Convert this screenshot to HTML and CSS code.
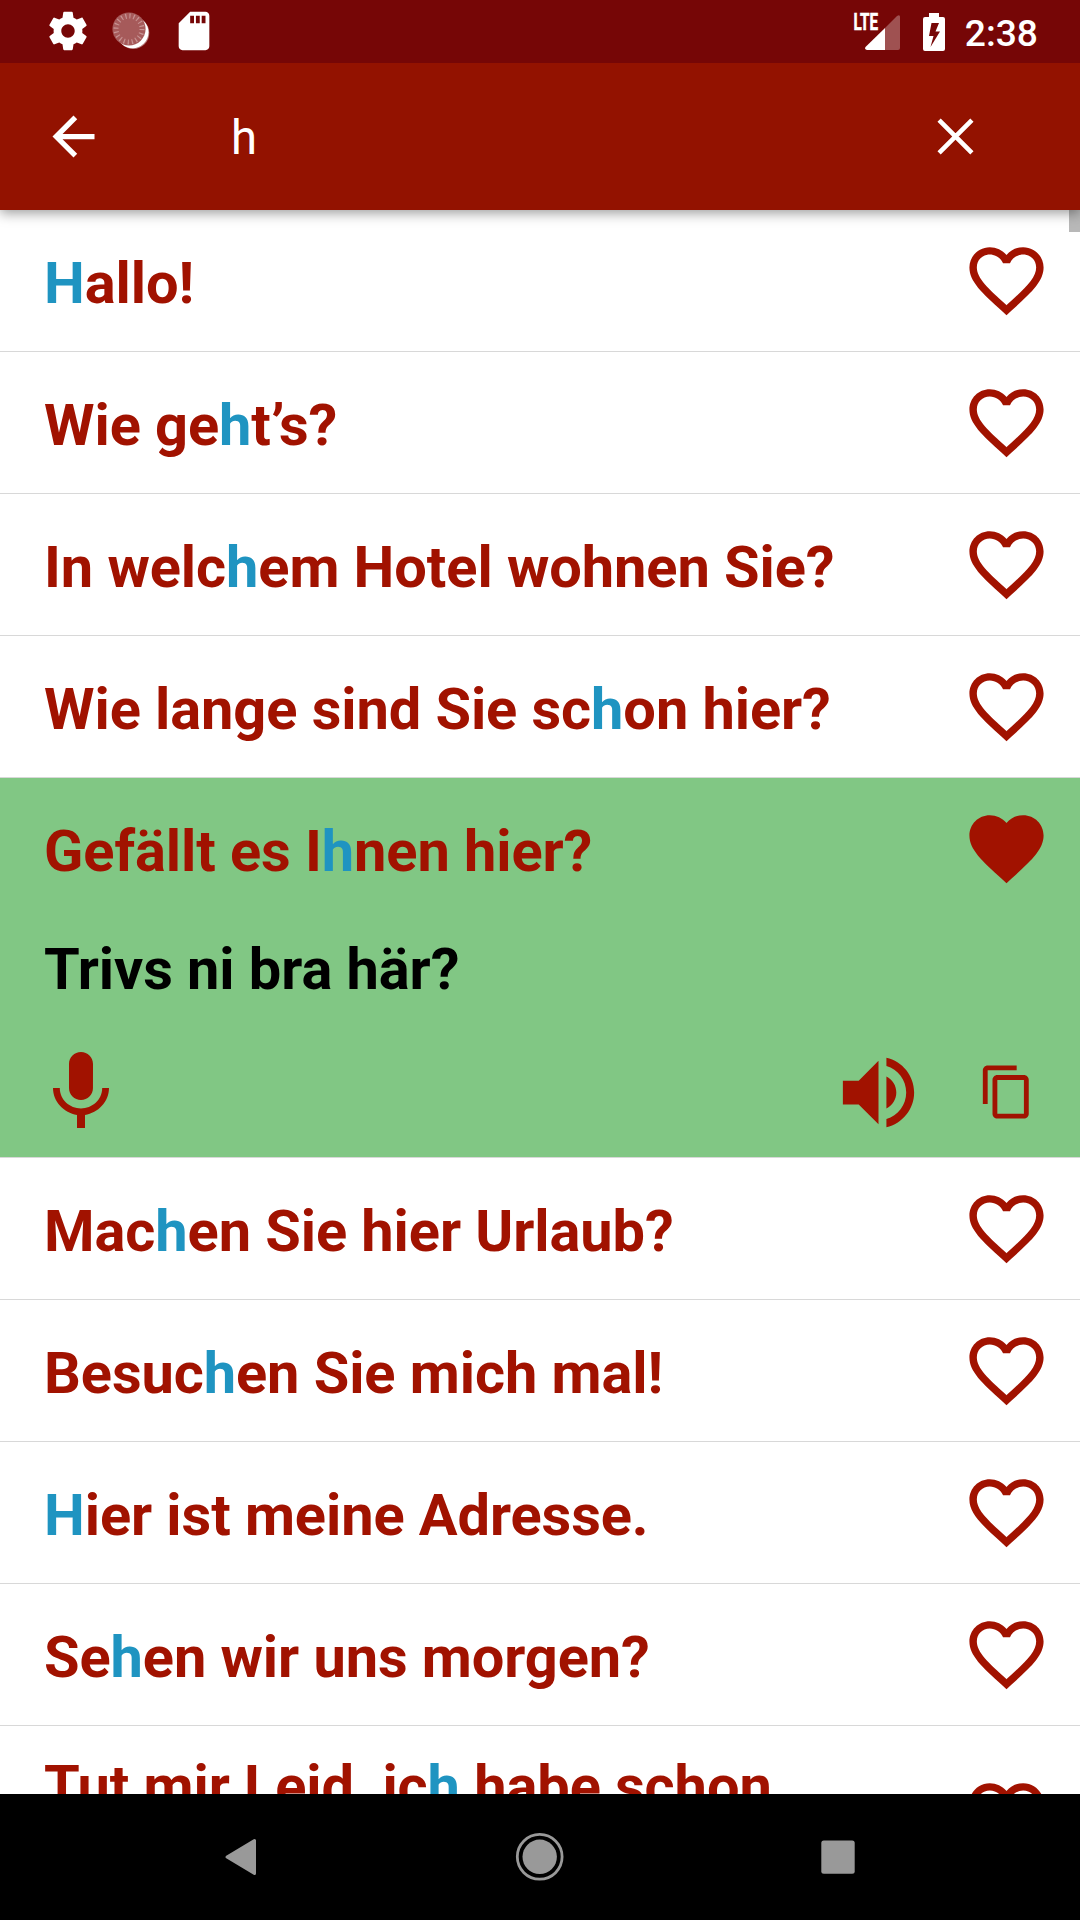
FILE: index.html
```html
<!DOCTYPE html>
<html lang="de">
<head>
<meta charset="utf-8">
<title>Phrasebook search</title>
<link rel="stylesheet" href="styles.css">
</head>
<body>
<svg class="defs" width="0" height="0" aria-hidden="true">
  <symbol id="heart" viewBox="0 0 24 24"><path d="M16.5 3c-1.74 0-3.41.81-4.5 2.09C10.91 3.81 9.24 3 7.5 3 4.42 3 2 5.42 2 8.5c0 3.78 3.4 6.86 8.55 11.54L12 21.35l1.45-1.32C18.6 15.36 22 12.28 22 8.5 22 5.42 19.58 3 16.5 3zm-4.4 15.55l-.1.1-.1-.1C7.14 14.24 4 11.39 4 8.5 4 6.5 5.5 5 7.5 5c1.54 0 3.04.99 3.57 2.36h1.87C13.46 5.99 14.96 5 16.5 5c2 0 3.5 1.5 3.5 3.5 0 2.89-3.14 5.74-7.9 10.05z"/></symbol>
  <symbol id="heart-full" viewBox="0 0 24 24"><path d="M12 21.35l-1.45-1.32C5.4 15.36 2 12.28 2 8.5 2 5.42 4.42 3 7.5 3c1.74 0 3.41.81 4.5 2.09C13.09 3.81 14.76 3 16.5 3 19.58 3 22 5.42 22 8.5c0 3.78-3.4 6.86-8.55 11.54L12 21.35z"/></symbol>
</svg>
<div class="screen">
  <header class="status">
    <div class="status-left">
      <svg class="sicon" viewBox="0 0 24 24"><path d="M19.43 12.98c.04-.32.07-.64.07-.98s-.03-.66-.07-.98l2.11-1.65c.19-.15.24-.42.12-.64l-2-3.46c-.12-.22-.39-.3-.61-.22l-2.49 1c-.52-.4-1.08-.73-1.69-.98l-.38-2.65C14.46 2.18 14.25 2 14 2h-4c-.25 0-.46.18-.49.42l-.38 2.65c-.61.25-1.17.59-1.69.98l-2.49-1c-.23-.09-.49 0-.61.22l-2 3.46c-.13.22-.07.49.12.64l2.11 1.65c-.04.32-.07.65-.07.98s.03.66.07.98l-2.11 1.65c-.19.15-.24.42-.12.64l2 3.46c.12.22.39.3.61.22l2.49-1c.52.4 1.08.73 1.69.98l.38 2.65c.03.24.24.42.49.42h4c.25 0 .46-.18.49-.42l.38-2.65c.61-.25 1.17-.59 1.69-.98l2.49 1c.23.09.49 0 .61-.22l2-3.46c.12-.22.07-.49-.12-.64l-2.11-1.65zM12 15.5c-1.93 0-3.5-1.57-3.5-3.5s1.57-3.5 3.5-3.5 3.5 1.57 3.5 3.5-1.57 3.5-3.5 3.5z"/></svg>
      <svg class="sicon" viewBox="0 0 46 46">
        <circle cx="25.3" cy="25" r="16" class="sync-back"/>
        <circle cx="24.5" cy="24.3" r="16" class="sync-white"/>
        <circle cx="21" cy="21" r="16.6" class="sync-disc"/>
        <circle cx="21" cy="21" r="13" class="sync-ticks"/>
      </svg>
      <svg class="sicon" viewBox="0 0 24 24"><path d="M18 2h-8L4.02 8 4 20c0 1.100.9 2 2 2h12c1.100 0 2-.9 2-2V4c0-1.100-.9-2-2-2zm-6 6h-2V4h2v4zm3 0h-2V4h2v4zm3 0h-2V4h2v4z"/></svg>
    </div>
    <div class="status-right">
      <svg class="signal" width="48" height="40" viewBox="853 12 48 40">
        <path class="faint" d="M885 28L897 16q3-2 3 1v31q0 2-2 2h-13z"/>
        <path d="M885 28v22h-18q-3-1-1.500-3z"/>
        <text x="853.500" y="30" textLength="24.500" lengthAdjust="spacingAndGlyphs">LTE</text>
      </svg>
      <svg class="battery" width="22" height="38" viewBox="0 0 22 38"><path fill-rule="evenodd" d="M6 0h10v4h4q2 0 2 2v30q0 2-2 2H2q-2 0-2-2V6q0-2 2-2h4zM8.500 10L6 23h4.500L7.500 34 17 18.500h-4.500L16 10z"/></svg>
      <span class="clock">2:38</span>
    </div>
  </header>
  <div class="appbar">
    <svg class="nav-icon" viewBox="0 0 24 24"><path d="M20 11H7.830l5.590-5.590L12 4l-8 8 8 8 1.410-1.410L7.830 13H20v-2z"/></svg>
    <span class="query">h</span>
    <svg class="nav-icon close" viewBox="0 0 24 24"><path d="M5.750 5.750l12.500 12.500M18.250 5.750l-12.500 12.500"/></svg>
  </div>
  <main class="list">
    <div class="thumb"></div>
    <div class="row"><p class="phrase"><b>H</b>allo!</p><svg class="fav"><use href="#heart"/></svg></div>
    <div class="row"><p class="phrase">Wie ge<b>h</b>t’s?</p><svg class="fav"><use href="#heart"/></svg></div>
    <div class="row"><p class="phrase">In welc<b>h</b>em Hotel wohnen Sie?</p><svg class="fav"><use href="#heart"/></svg></div>
    <div class="row"><p class="phrase">Wie lange sind Sie sc<b>h</b>on hier?</p><svg class="fav"><use href="#heart"/></svg></div>
    <section class="open">
      <div class="row"><p class="phrase">Gefällt es I<b>h</b>nen hier?</p><svg class="fav"><use href="#heart-full"/></svg></div>
      <p class="phrase translation" lang="sv">Trivs ni bra här?</p>
      <div class="tools">
        <svg class="tool" viewBox="0 0 24 24"><path d="M12 14c1.660 0 2.990-1.340 2.990-3L15 5c0-1.660-1.340-3-3-3S9 3.340 9 5v6c0 1.660 1.340 3 3 3zm5.300-3c0 3-2.540 5.100-5.300 5.100S6.700 14 6.700 11H5c0 3.410 2.720 6.230 6 6.720V21h2v-3.280c3.280-.48 6-3.300 6-6.720h-1.700z"/></svg>
        <svg class="tool speaker" viewBox="0 0 24 24"><path d="M3 9v6h4l5 5V4L7 9H3zm13.500 3c0-1.770-1.020-3.290-2.500-4.030v8.050c1.480-.73 2.500-2.250 2.500-4.020zM14 3.230v2.060c2.890.86 5 3.540 5 6.710s-2.110 5.850-5 6.710v2.060c4.010-.91 7-4.490 7-8.770s-2.990-7.860-7-8.770z"/></svg>
        <svg class="copy" viewBox="0 0 24 24"><path d="M16 1H4c-1.100 0-2 .9-2 2v14h2V3h12V1zm3 4H8c-1.100 0-2 .9-2 2v14c0 1.100.9 2 2 2h11c1.100 0 2-.9 2-2V7c0-1.100-.9-2-2-2zm0 16H8V7h11v14z"/></svg>
      </div>
    </section>
    <div class="row"><p class="phrase">Mac<b>h</b>en Sie hier Urlaub?</p><svg class="fav"><use href="#heart"/></svg></div>
    <div class="row"><p class="phrase">Besuc<b>h</b>en Sie mich mal!</p><svg class="fav"><use href="#heart"/></svg></div>
    <div class="row"><p class="phrase"><b>H</b>ier ist meine Adresse.</p><svg class="fav"><use href="#heart"/></svg></div>
    <div class="row"><p class="phrase">Se<b>h</b>en wir uns morgen?</p><svg class="fav"><use href="#heart"/></svg></div>
    <div class="row tall"><p class="phrase">Tut mir Leid, ic<b>h</b> habe schon etwas vor.</p><svg class="fav"><use href="#heart"/></svg></div>
  </main>
  <nav class="navbar">
    <svg viewBox="0 0 50 50"><path class="round" d="M11 25L38.500 8.500v33z"/></svg>
    <svg viewBox="0 0 50 50"><circle cx="24.700" cy="24.800" r="22.400" class="ring"/><circle cx="24.700" cy="24.800" r="17.200"/></svg>
    <svg viewBox="0 0 50 50"><rect x="8.300" y="8.400" width="33.400" height="33.400" rx="2.500"/></svg>
  </nav>
</div>
</body>
</html>
```

FILE: styles.css
```css
* { box-sizing: border-box; }

body {
  margin: 0;
  font-family: Roboto, "Liberation Sans", sans-serif;
}

svg { display: block; flex: none; }

.defs { position: absolute; }

.screen {
  width: 1080px;
  height: 1920px;
  display: flex;
  flex-direction: column;
  overflow: hidden;
  background: #fff;
}

/* system status bar */
.status {
  flex: none;
  height: 63px;
  padding: 0 42px 0 45px;
  display: flex;
  align-items: center;
  justify-content: space-between;
  position: relative;
  z-index: 2;
  background: #760606;
  color: #fff;
  fill: #fff;
}

.status-left { display: flex; gap: 17px; padding-bottom: 1px; }
.sicon { width: 46px; height: 46px; }
.sync-back { fill: #fff; fill-opacity: .45; }
.sync-white { fill: #fff; }
.sync-disc { fill: #a65a5a; }
.sync-ticks {
  fill: none;
  stroke: #c79393;
  stroke-width: 5;
  stroke-dasharray: 1.2 2.884;
}

.status-right { display: flex; align-items: center; }
.signal text {
  font-size: 23px;
  font-weight: 700;
  stroke: #fff;
  stroke-width: .6;
}
.faint { fill-opacity: .3; }
.battery { margin: 0 20px 0 22px; }
.clock {
  font-size: 37.2px;
  font-weight: 500;
  line-height: 43px;
  padding-top: 3px;
}

/* search bar */
.appbar {
  flex: none;
  height: 147px;
  padding: 0 93px 0 42px;
  display: flex;
  align-items: center;
  position: relative;
  z-index: 1;
  background: #931200;
  color: #fff;
  box-shadow: 0 3px 12px rgba(0, 0, 0, .4);
}
.nav-icon { width: 63px; height: 63px; fill: #fff; }
.close { stroke: #fff; stroke-width: 1.75; }
.query {
  flex: 1;
  margin-left: 126px;
  padding-top: 2px;
  font-size: 47.25px;
  line-height: 56px;
}

/* phrase list */
.list {
  flex: 1;
  min-height: 0;
  overflow: hidden;
  position: relative;
}
.thumb {
  position: absolute;
  top: 0;
  right: 0;
  width: 11px;
  height: 22px;
  background: #b8b8b8;
}
.row {
  min-height: 142px;
  padding: 21px 29px 20px 44px;
  display: flex;
  align-items: center;
  justify-content: space-between;
  border-bottom: 1px solid #d8d8d8;
}
.phrase {
  margin: 0;
  padding-top: 4px;
  max-width: 880px;
  font-size: 57.75px;
  font-weight: 700;
  line-height: 68px;
  letter-spacing: -.08px;
  color: #a11200;
}
.phrase b { font-weight: inherit; color: #1f94c1; }
.fav { width: 89px; height: 89px; fill: #a11200; }
.row .fav { margin: -22px 0 -21px; }
.tall { padding-top: 22px; }
.tall .phrase { max-width: 840px; }
.row.tall .fav { margin-top: -24px; }

.open {
  height: 380px;
  background: #81c784;
  border-bottom: 1px solid #d8d8d8;
}
.open .row { border-bottom: 1px solid transparent; }
.translation { padding-left: 44px; color: #000; margin-top: 11px; }
.tools {
  display: flex;
  align-items: center;
  padding: 0 44px 0 33px;
  margin-top: 41px;
  fill: #a11200;
  height: 96px;
}
.tool { width: 96px; height: 96px; }
.speaker { width: 95px; height: 95px; margin-left: auto; }
.copy { width: 58px; height: 58px; margin-left: 52px; }

/* system navigation */
.navbar {
  flex: none;
  height: 126px;
  padding: 0 217px 1px 216px;
  display: flex;
  align-items: center;
  justify-content: space-between;
  background: #000;
  fill: #999;
}
.navbar svg { width: 50px; height: 50px; }
.round { stroke: #999; stroke-width: 3; stroke-linejoin: round; }
.ring { fill: none; stroke: #999; stroke-width: 2.8; }
```
